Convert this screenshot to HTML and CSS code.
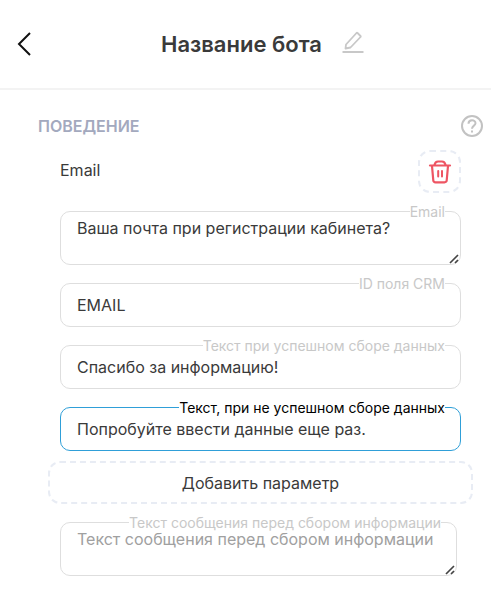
FILE: index.html
```html
<!DOCTYPE html>
<html lang="ru">
<head>
    <meta charset="UTF-8">
    <meta name="viewport" content="width=device-width, initial-scale=1.0">
    <title>Название бота</title>
    <link rel="stylesheet" href="styles.css">
</head>
<body>
    <header class="header">
        <button class="icon-btn back" type="button" aria-label="Назад">
            <svg width="16" height="26" viewBox="0 0 16 26" fill="none" stroke="#111" stroke-width="2">
                <path d="M14 2 L3 13 L14 24"/>
            </svg>
        </button>
        <h1 class="title">Название бота</h1>
        <button class="icon-btn edit" type="button" aria-label="Изменить название">
            <svg width="22" height="24" viewBox="0 0 22 24" fill="none" stroke="#c8c8c8" stroke-width="1.8" stroke-linejoin="round">
                <path d="M4 14.500 L14.500 3 Q15 2.500 15.500 3 L18.500 6 Q19 6.500 18.500 7 L8.500 17.500 L3.500 18.500 Z"/>
                <path d="M0.500 22 H21.500" stroke-width="2"/>
            </svg>
        </button>
    </header>

    <main class="content">
        <div class="section-head">
            <h2 class="section-title">Поведение</h2>
            <button class="icon-btn" type="button" aria-label="Справка">
                <svg width="24" height="24" viewBox="0 0 24 24" fill="none" stroke="#c2c2c2" stroke-width="2">
                    <circle cx="12" cy="12" r="10"/>
                    <path d="M8.500 9.800 C8.500 5.300 15.500 5.300 15.500 9.300 C15.500 11.700 12 11.700 12 14.800"/>
                    <path d="M12 16.500 V18.500"/>
                </svg>
            </button>
        </div>

        <form class="form">
            <div class="param-head">
                <span class="param-name">Email</span>
                <button class="delete-btn" type="button" aria-label="Удалить параметр">
                    <svg width="24" height="24" viewBox="0 0 24 24" fill="none" stroke="#ee5563" stroke-width="2.200" stroke-linecap="round" stroke-linejoin="round">
                        <path d="M2 5.500 H22"/>
                        <path d="M6.500 5 C7 2.500 8 1.500 10 1.500 H14 C16 1.500 17 2.500 17.500 5"/>
                        <path d="M4 6 L5.300 20.500 Q5.500 22.300 7.500 22.300 H16.500 Q18.500 22.300 18.700 20.500 L20 6"/>
                        <path d="M10.200 11 V16.500 M14 11 V16.500" stroke-width="2"/>
                    </svg>
                </button>
            </div>

            <div class="field">
                <label class="label" for="question">Email</label>
                <textarea class="input area" id="question">Ваша почта при регистрации кабинета?</textarea>
                <svg class="grip" width="12" height="12" viewBox="0 0 12 12" stroke="#444" stroke-width="1.700">
                    <path d="M2 10 L10 2 M7 10 L10 7"/>
                </svg>
            </div>
            <div class="field">
                <label class="label" for="crm">ID поля CRM</label>
                <input class="input" id="crm" type="text" value="EMAIL">
            </div>
            <div class="field">
                <label class="label" for="success">Текст при успешном сборе данных</label>
                <input class="input" id="success" type="text" value="Спасибо за информацию!">
            </div>
            <div class="field active">
                <label class="label" for="fail">Текст, при не успешном сборе данных</label>
                <input class="input" id="fail" type="text" value="Попробуйте ввести данные еще раз.">
            </div>

            <button class="add-btn" type="button">Добавить параметр</button>

            <div class="field last">
                <label class="label" for="before">Текст сообщения перед сбором информации</label>
                <textarea class="input area" id="before" placeholder="Текст сообщения перед сбором информации"></textarea>
                <svg class="grip" width="12" height="12" viewBox="0 0 12 12" stroke="#444" stroke-width="1.700">
                    <path d="M2 10 L10 2 M7 10 L10 7"/>
                </svg>
            </div>
        </form>
    </main>
</body>
</html>
```

FILE: styles.css
```css
* {
    box-sizing: border-box;
}

body {
    margin: 0;
    background: #fff;
    color: #3a3a3a;
    font-family: Inter, Roboto, sans-serif;
    font-size: 16px;
}

button,
input,
textarea {
    font: inherit;
    color: inherit;
}

svg {
    display: block;
}

.icon-btn {
    padding: 0;
    border: none;
    background: none;
    cursor: pointer;
}

/* header */
.header {
    display: grid;
    grid-template-columns: 1fr auto 1fr;
    align-items: center;
    height: 90px;
    padding: 0 24px 0 16px;
    border-bottom: 2px solid #f3f3f3;
}

.back {
    justify-self: start;
}

.title {
    margin: 0;
    font-size: 22px;
    font-weight: 600;
    line-height: 28px;
    font-optical-sizing: none;
}

.edit {
    justify-self: start;
    margin-left: 20px;
    padding-bottom: 4px;
}

/* content */
.content {
    padding: 24px 7px 12px 38px;
}

.section-head {
    display: flex;
    align-items: center;
    justify-content: space-between;
}

.section-title {
    margin: 0;
    color: #a3a9be;
    font-size: 16px;
    font-weight: 600;
    line-height: 24px;
    text-transform: uppercase;
}

.form {
    display: flex;
    flex-direction: column;
    gap: 18px;
    padding: 12px 23px 0 22px;
}

.param-head {
    display: flex;
    align-items: flex-start;
    justify-content: space-between;
}

.param-name {
    line-height: 40px;
}

.delete-btn {
    display: flex;
    align-items: center;
    justify-content: center;
    width: 43px;
    height: 43px;
    padding: 0;
    border: 2px dashed #e8ecf4;
    border-radius: 12px;
    background: none;
    cursor: pointer;
}

/* fields */
.field {
    position: relative;
}

.label {
    position: absolute;
    top: -8px;
    right: 16px;
    background: #fff;
    color: #c8c8c8;
    font-size: 14px;
    line-height: 18px;
}

.input {
    display: block;
    width: 100%;
    height: 44px;
    padding: 0 16px;
    border: 1px solid #dedede;
    border-radius: 10px;
    outline: none;
    background: #fff;
}

.area {
    height: 54px;
    padding-top: 6px;
    line-height: 20px;
    resize: none;
}

.input::placeholder {
    color: #a0a0a0;
}

.grip {
    position: absolute;
    right: 1px;
    bottom: 0;
}

.active .label {
    color: #000;
}

.active .input {
    border-color: #2f9fd8;
}

.add-btn {
    height: 43px;
    margin: -8px -12px 0;
    border: 2px dashed #e8ecf4;
    border-radius: 12px;
    background: none;
    cursor: pointer;
}

.last {
    margin-right: 4px;
}
```
